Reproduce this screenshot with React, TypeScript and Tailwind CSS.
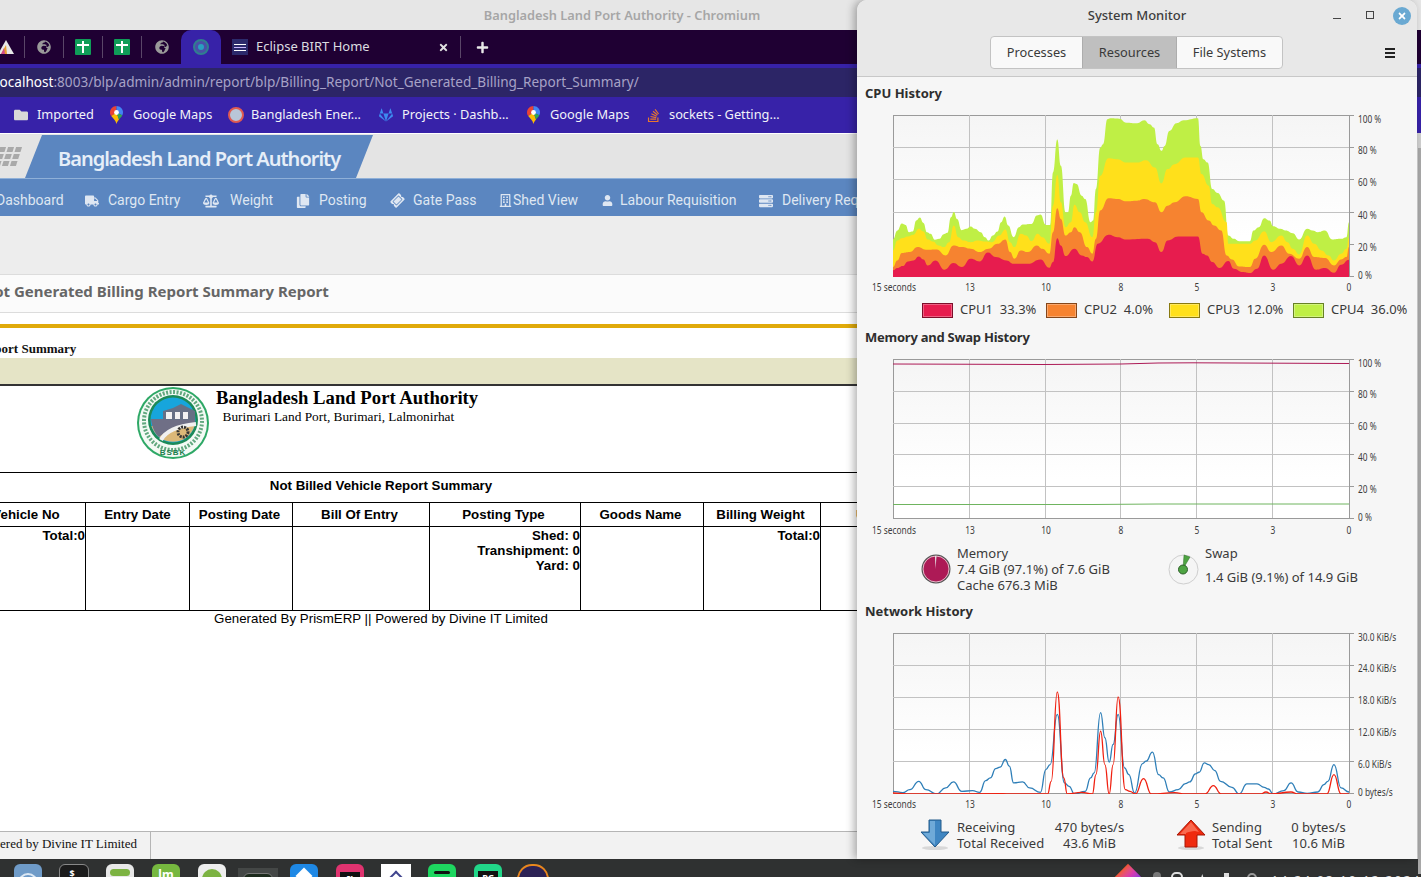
import { FaBalanceScale, FaCopy, FaFolder, FaGitlab, FaGlobeAfrica, FaPlus, FaRegBuilding, FaServer, FaStackOverflow, FaTicketAlt, FaTimes, FaTruck, FaUser } from 'react-icons/fa';

type Pt = [number, number];

const cpu4: Pt[] = [[93,402],[105,375],[118,354],[128,358],[138,380],[148,378],[158,345],[168,336],[178,352],[188,380],[198,385],[210,403],[222,400],[235,386],[245,382],[255,335],[263,319],[272,340],[285,374],[298,370],[310,363],[322,370],[338,380],[350,395],[360,405],[372,390],[385,378],[395,350],[405,333],[415,360],[430,395],[445,365],[455,357],[480,355],[495,330],[505,327],[520,358],[532,358],[540,200],[552,101],[562,180],[575,320],[582,320],[590,270],[598,232],[606,235],[620,270],[630,280],[645,350],[652,345],[660,250],[672,125],[680,115],[692,40],[700,37],[725,38],[745,50],[775,52],[795,43],[810,55],[822,65],[832,115],[843,135],[852,120],[865,75],[885,52],[905,43],[945,37],[952,120],[960,160],[972,170],[985,250],[1000,262],[1018,285],[1030,390],[1045,400],[1060,407],[1090,407],[1100,375],[1115,365],[1130,338],[1145,345],[1155,362],[1175,370],[1190,375],[1210,383],[1228,402],[1250,370],[1265,375],[1280,380],[1300,375],[1320,402],[1345,400],[1360,395],[1367,350]];
const cpu3: Pt[] = [[93,435],[105,405],[118,398],[135,393],[150,388],[165,370],[178,378],[190,402],[205,408],[220,420],[235,425],[250,410],[263,360],[275,395],[290,405],[310,410],[330,405],[350,408],[370,410],[390,390],[407,372],[420,410],[432,425],[450,385],[465,390],[480,407],[497,385],[510,395],[530,415],[540,300],[552,208],[562,290],[575,365],[590,350],[600,297],[615,320],[630,350],[650,395],[660,320],[672,210],[695,157],[720,160],[745,170],[775,170],[800,163],[825,185],[843,233],[860,190],[880,175],[910,155],[945,155],[955,205],[975,240],[985,295],[1000,305],[1025,350],[1030,415],[1090,415],[1105,405],[1130,377],[1150,410],[1178,390],[1195,410],[1210,430],[1228,447],[1250,390],[1270,415],[1290,435],[1310,450],[1325,465],[1345,445],[1360,430],[1367,395]];
const cpu2: Pt[] = [[93,485],[105,465],[118,443],[140,440],[162,425],[185,433],[215,432],[240,450],[262,420],[285,425],[310,430],[335,440],[360,430],[385,415],[407,402],[420,440],[432,460],[450,435],[470,440],[495,420],[510,430],[530,445],[540,380],[552,308],[562,340],[575,390],[590,380],[600,365],[615,380],[635,425],[650,445],[660,400],[672,315],[695,278],[720,280],[745,287],[775,285],[795,280],[825,290],[843,320],[860,300],[880,290],[910,272],[945,280],[955,320],[975,345],[990,360],[1010,375],[1025,450],[1040,462],[1060,483],[1090,485],[1105,460],[1130,418],[1150,440],[1178,420],[1200,445],[1228,460],[1250,425],[1270,455],[1300,458],[1325,480],[1345,462],[1360,455],[1367,425]];
const cpu1: Pt[] = [[93,495],[105,488],[120,482],[135,468],[150,465],[165,453],[178,462],[190,480],[212,465],[237,493],[262,473],[285,485],[310,460],[335,468],[358,441],[380,455],[410,465],[430,475],[470,475],[505,462],[530,487],[540,470],[552,398],[562,420],[575,452],[600,430],[620,450],[635,455],[650,468],[665,415],[695,388],[720,395],[745,402],[805,400],[825,410],[843,440],[860,405],[890,393],[945,393],[958,445],[970,450],[985,470],[1005,488],[1030,467],[1045,490],[1070,500],[1090,503],[1110,490],[1130,450],[1155,493],[1178,475],[1205,452],[1228,480],[1250,450],[1275,493],[1300,488],[1325,502],[1345,478],[1367,463]];
const netIn: Pt[] = [[93,480],[120,484],[140,475],[165,450],[185,475],[215,488],[240,470],[262,452],[285,480],[315,478],[335,483],[352,448],[365,440],[380,412],[392,408],[407,385],[418,405],[430,455],[455,452],[475,470],[505,483],[520,415],[532,400],[552,250],[572,455],[585,465],[600,488],[630,480],[645,440],[655,425],[673,245],[685,320],[697,393],[708,340],[722,250],[740,410],[752,430],[768,485],[790,397],[800,390],[818,363],[835,430],[848,440],[865,482],[890,475],[910,457],[922,452],[938,428],[948,423],[963,395],[975,400],[992,418],[1008,450],[1040,468],[1060,488],[1082,458],[1110,458],[1130,468],[1142,473],[1155,488],[1185,478],[1205,455],[1225,482],[1250,486],[1280,482],[1297,460],[1308,450],[1325,400],[1345,470],[1367,482]];
const netOut: Pt[] = [[93,485],[130,488],[400,487],[420,488],[525,488],[535,450],[552,183],[570,440],[580,488],[620,483],[650,488],[660,430],[673,300],[685,400],[697,488],[708,400],[722,198],[742,475],[755,480],[770,488],[793,442],[815,488],[880,484],[910,488],[965,488],[988,463],[1010,488],[1120,488],[1135,482],[1150,488],[1205,482],[1225,488],[1305,488],[1325,430],[1345,488],[1367,488]];

const smooth = (pts: Pt[]) => {
  let d = `M${pts[0][0]} ${pts[0][1]}`;
  for (let i = 1; i < pts.length; i++) {
    const [x0, y0] = pts[i - 1];
    const [x1, y1] = pts[i];
    const mx = (x0 + x1) / 2;
    d += `C${mx} ${y0} ${mx} ${y1} ${x1} ${y1}`;
  }
  return d;
};

const ticks = [
  { label: '13', x: 105 },
  { label: '10', x: 181 },
  { label: '8', x: 256 },
  { label: '5', x: 332 },
  { label: '3', x: 408 },
];

const labelShift = [8, 7, 7, 7, 7, 3];
const cond = 'fill-[#3c3c3c] text-[10px] font-["Noto_Sans"]';

const Chart = ({ id, h, yLabels, xDy = 15, children }: { id: string; h: number; yLabels: string[]; xDy?: number; children: React.ReactNode }) => {
  const top = 14;
  const bottom = top + h;
  const rows = yLabels.map((_, i) => Math.round(top + (h * i) / (yLabels.length - 1)));
  return (
    <svg width="552" height="192" className="block">
      <defs>
        <linearGradient id={id} x1="0" y1="0" x2="0" y2="1">
          <stop offset="0" stopColor="#f5f5f5" />
          <stop offset="0.75" stopColor="#ffffff" />
        </linearGradient>
      </defs>
      <rect x="28.5" y={top + 0.5} width="456" height={h} fill={`url(#${id})`} stroke="#9a9a9a" />
      {rows.slice(1, -1).map((y) => (
        <line key={y} x1="28" x2="484" y1={y + 0.5} y2={y + 0.5} stroke="#c2c2c2" />
      ))}
      {ticks.map((t) => (
        <line key={t.x} x1={t.x - 0.5} x2={t.x - 0.5} y1={top} y2={bottom} stroke="#c2c2c2" />
      ))}
      {children}
      {rows.map((y, i) => (
        <g key={y}>
          <line x1="484" x2="489" y1={y + 0.5} y2={y + 0.5} stroke="#9a9a9a" />
          <text transform={`translate(493 ${y + labelShift[i]}) scale(0.83 1)`} className={cond}>
            {yLabels[i]}
          </text>
        </g>
      ))}
      <text transform={`translate(7 ${bottom + xDy}) scale(0.84 1)`} className={cond}>15 seconds</text>
      {ticks.map((t) => (
        <text key={t.label} transform={`translate(${t.x} ${bottom + xDy}) scale(0.84 1)`} textAnchor="middle" className={cond}>
          {t.label}
        </text>
      ))}
      <text transform={`translate(484 ${bottom + xDy}) scale(0.84 1)`} textAnchor="middle" className={cond}>0</text>
    </svg>
  );
};

const pct = ['100 %', '80 %', '60 %', '40 %', '20 %', '0 %'];
const net = ['30.0 KiB/s', '24.0 KiB/s', '18.0 KiB/s', '12.0 KiB/s', '6.0 KiB/s', '0 bytes/s'];

const legend = [
  { name: 'CPU1', val: '33.3%', cls: 'bg-[#e71c4e] border-[#7d0e2a]', w: 'w-[124px]' },
  { name: 'CPU2', val: '4.0%', cls: 'bg-[#f68330] border-[#84461a]', w: 'w-[123px]' },
  { name: 'CPU3', val: '12.0%', cls: 'bg-[#ffe01b] border-[#89790f]', w: 'w-[124px]' },
  { name: 'CPU4', val: '36.0%', cls: 'bg-[#bfef45] border-[#678125]', w: 'w-[124px]' },
];

const MapPin = () => (
  <svg width="13" height="18" viewBox="0 0 13 18">
    <path d="M6.5 0C2.9 0 0 2.9 0 6.4c0 1.400.5 2.600 1.200 3.600L6.500 6.500z" fill="#ea4335" />
    <path d="M6.500 0c3.600 0 6.500 2.900 6.500 6.400 0 1-.3 2-.7 2.800L6.500 6.500z" fill="#4285f4" />
    <path d="M1.200 10c1.500 2.200 4.300 4 5.300 8 .5-2 1.500-3.300 2.500-4.500L6.500 6.500z" fill="#fbbc04" />
    <path d="M12.300 9.200C11.500 11 10 12 9 13.500L6.500 6.500z" fill="#34a853" />
    <circle cx="6.500" cy="6.500" r="2.400" fill="#fff" />
  </svg>
);

const TabCell = ({ children }: { children: React.ReactNode }) => (
  <div className="flex h-[34px] w-[39px] items-center justify-center">
    <div className="flex h-[22px] w-full items-center justify-center border-r border-[#5a4668]">{children}</div>
  </div>
);

const SheetIcon = () => (
  <div className="relative h-4 w-4 rounded-[1px] bg-[#0f9d58]">
    <div className="absolute left-[2px] right-[2px] top-[5px] h-[2px] bg-white" />
    <div className="absolute bottom-[2px] left-[7px] top-[2px] w-[2px] bg-white" />
  </div>
);

const bookmarks = [
  { icon: <FaFolder className="text-[14px] text-[#d8d8d8]" />, text: 'Imported', w: 'w-[96px]', ml: 'ml-[14px]' },
  { icon: <MapPin />, text: 'Google Maps', w: 'w-[118px]', ml: 'ml-0' },
  { icon: <div className="h-4 w-4 rounded-full border-2 border-[#e05a50] bg-[#b9c6d8]" />, text: 'Bangladesh Ener…', w: 'w-[151px]', ml: 'ml-0' },
  { icon: <FaGitlab className="text-[14px] text-[#3d8bf0]" />, text: 'Projects · Dashb…', w: 'w-[148px]', ml: 'ml-0' },
  { icon: <MapPin />, text: 'Google Maps', w: 'w-[119px]', ml: 'ml-0' },
  { icon: <FaStackOverflow className="text-[15px] text-[#e8772e]" />, text: 'sockets - Getting…', w: 'w-[150px]', ml: 'ml-0' },
];

const navItems = [
  { icon: <FaTruck className="text-[14px]" />, text: 'Cargo Entry', w: 'w-[118px]' },
  { icon: <FaBalanceScale className="text-[16px]" />, text: 'Weight', w: 'w-[93px]', gap: 'gap-[11px]' },
  { icon: <FaCopy className="text-[14px]" />, text: 'Posting', w: 'w-[94px]' },
  { icon: <FaTicketAlt className="-rotate-45 text-[13px]" />, text: 'Gate Pass', w: 'w-[108px]' },
  { icon: <FaRegBuilding className="text-[13px]" />, text: 'Shed View', w: 'w-[102px]', gap: 'gap-[1px]' },
  { icon: <FaUser className="text-[11px]" />, text: 'Labour Requisition', w: 'w-[159px]', gap: 'gap-[6px]' },
  { icon: <FaServer className="text-[14px]" />, text: 'Delivery Requisition', w: 'w-[160px]' },
];

const Logo = () => (
  <svg width="78" height="72" viewBox="0 0 78 72" className="block">
    <circle cx="38" cy="36" r="36" fill="#2ea866" />
    <circle cx="38" cy="36" r="34" fill="#f4faf5" />
    <circle cx="38" cy="34" r="29" fill="none" stroke="#62a87f" strokeWidth="4" strokeDasharray="2 1.500" />
    <circle cx="38" cy="33" r="25" fill="#1c8a58" />
    <circle cx="38" cy="33" r="22.500" fill="#17a5dc" />
    <path d="M16.500 39a22.500 22.500 0 0 0 43 0z" fill="#dcb878" />
    <path d="M16 32h44v6C52 38 36 40 24 50c-4-3-7-10-8-18z" fill="#6f6f86" />
    <path d="M28 24l10-3 8-4 14 7v9H28z" fill="#667085" />
    <path d="M31 25h6v7h-6zM40 25h5v7h-5zM48 25h5v7h-5z" fill="#f2f2f2" />
    <path d="M26 53c4-8 16-14 35-16" fill="none" stroke="#f0f0f0" strokeWidth="4" />
    <circle cx="48" cy="45" r="5" fill="none" stroke="#333" strokeWidth="3" strokeDasharray="2 1" />
    <text x="38" y="68" textAnchor="middle" className="fill-[#1c7f4f] text-[8px] font-bold tracking-[1px] font-['Liberation_Sans']">BSBK</text>
  </svg>
);

const headers = ['Vehicle No', 'Entry Date', 'Posting Date', 'Bill Of Entry', 'Posting Type', 'Goods Name', 'Billing Weight'];

const Dock = ({ cls, children }: { cls: string; children?: React.ReactNode }) => (
  <div className={`flex h-[30px] w-[28px] shrink-0 items-start justify-center overflow-hidden rounded-[6px] pt-[2px] ${cls}`}>{children}</div>
);

const App = () => {
  return (
    <div className="relative flex h-[877px] w-[1421px] flex-col overflow-hidden bg-white font-['Noto_Sans',sans-serif]">
      {/* browser chrome */}
      <div className="flex h-[30px] shrink-0 items-center justify-center bg-[#e6e6e6] pr-[177px] pt-px text-[12.800px] font-semibold text-[#a6a6a6]">
        Bangladesh Land Port Authority - Chromium
      </div>
      <div className="flex h-[34px] shrink-0 items-center bg-[#1f0033]">
        <div className="flex h-[34px] w-[24px] items-center justify-end overflow-hidden pr-[10px]">
          <div className="flex h-[22px] items-center">
            <svg width="16" height="16" viewBox="0 0 16 16" className="shrink-0">
              <path d="M8 1l8 14H0z" fill="#e8e8e8" />
              <path d="M8 6l-5 9h6z" fill="#e8a030" />
              <path d="M6 9l-3 6h4z" fill="#d04a8a" />
            </svg>
          </div>
        </div>
        <div className="h-[22px] w-px bg-[#5a4668]" />
        <div className="flex">
          <TabCell><FaGlobeAfrica className="text-[14px] text-[#9a9a9a]" /></TabCell>
          <TabCell><SheetIcon /></TabCell>
          <TabCell><SheetIcon /></TabCell>
          <div className="flex h-[34px] w-[39px] items-center justify-center">
            <FaGlobeAfrica className="text-[14px] text-[#9a9a9a]" />
          </div>
        </div>
        <div className="flex h-[34px] w-[40px] items-center justify-center rounded-t-[10px] bg-[#3722a8]">
          <div className="flex h-4 w-4 items-center justify-center rounded-full border-2 border-[#2f7f8f] bg-[#4a4fa8]">
            <div className="h-[6px] w-[6px] rounded-full bg-[#2a9fc0]" />
          </div>
        </div>
        <div className="flex h-[34px] w-[239px] items-center pl-[11px] text-[13px] text-[#dcdce0]">
          <div className="flex h-4 w-4 flex-col justify-center gap-[2px] bg-[#2c2a6c] px-[2px]">
            <div className="h-px bg-white" />
            <div className="h-px bg-[#c9b6ff]" />
            <div className="h-px bg-white" />
          </div>
          <span className="ml-[8px] flex-1">Eclipse BIRT Home</span>
          <FaTimes className="mr-[11px] text-[11px] text-[#e0e0e0]" />
        </div>
        <div className="h-[22px] w-px bg-[#5a4668]" />
        <FaPlus className="ml-[15px] text-[13px] text-[#e8e8e8]" />
      </div>
      <div className="h-[4px] shrink-0 bg-[#3722a8]" />
      <div className="flex h-[29px] shrink-0 items-center overflow-hidden whitespace-nowrap bg-[#2c2566] text-[13.600px] text-[#a7a2c6]">
        <span className="-ml-[4px] text-white">localhost</span>
        <span>:8003/blp/admin/admin/report/blp/Billing_Report/Not_Generated_Billing_Report_Summary/</span>
      </div>
      <div className="flex h-[36px] shrink-0 items-center whitespace-nowrap bg-[#3722a8] text-[12.800px] text-[#f2f2f8]">
        {bookmarks.map((b, i) => (
          <div key={i} className={`flex shrink-0 items-center ${b.w} ${b.ml}`}>
            <span className="flex w-[23px] shrink-0 justify-start">{b.icon}</span>
            <span>{b.text}</span>
          </div>
        ))}
      </div>
      <div className="h-px shrink-0 bg-white" />

      {/* page */}
      <div className="flex h-[44px] shrink-0 items-end bg-[#e4e4e4]">
        <div className="flex h-[44px] w-[25px] items-center">
          <div className="-ml-[3px] grid -skew-x-[18deg] grid-cols-3 gap-[2px]">
            {Array.from({ length: 9 }).map((_, i) => (
              <div key={i} className="h-[5px] w-[6px] bg-[#a9a9a9]" />
            ))}
          </div>
        </div>
        <div className="flex h-[43px] w-[348px] items-center whitespace-nowrap bg-[#5b86c0] pl-[33px] pt-[5px] text-[20px] font-semibold tracking-[-1px] text-[#e6eef8] [clip-path:polygon(17px_0,100%_0,331px_100%,0_100%)]">
          Bangladesh Land Port Authority
        </div>
      </div>
      <div className="flex h-[38px] shrink-0 items-center overflow-hidden whitespace-nowrap border-t border-[#8fb0d8] bg-[#5b86c0] pt-[6px] font-['Roboto'] text-[14px] text-[#dfe7f2]">
        <span className="-ml-[4px] w-[89px] shrink-0">Dashboard</span>
        {navItems.map((n) => (
          <div key={n.text} className={`flex shrink-0 items-center ${n.w} ${n.gap ?? 'gap-[9px]'}`}>
            <span className="flex min-w-[14px] justify-center">{n.icon}</span>
            <span>{n.text}</span>
          </div>
        ))}
      </div>
      <div className="h-[58px] shrink-0 bg-[#ededed]" />
      <div className="flex h-[39px] shrink-0 items-center overflow-hidden whitespace-nowrap border-y border-[#dcdcdc] bg-[#fbfbfb] pb-[4px] text-[15px] font-bold text-[#666666]">
        <span className="-ml-[18px] shrink-0">Not Generated Billing Report Summary Report</span>
      </div>
      <div className="mt-[11px] h-[4px] shrink-0 bg-[#e0aa0a]" />
      <div className="flex h-[30px] shrink-0 items-end overflow-hidden whitespace-nowrap font-['Liberation_Serif',serif] text-[13px] font-bold text-[#111]">
        <span className="-ml-[106px] shrink-0">Not Generated Report Summary</span>
      </div>
      <div className="h-[26px] shrink-0 bg-[#e5e4c6]" />
      <div className="h-[2px] shrink-0 bg-[#333]" />
      <div className="flex h-[87px] shrink-0 border-b border-black font-['Liberation_Serif',serif] text-black">
        <div className="ml-[135px] mt-px">
          <Logo />
        </div>
        <div className="ml-[3px]">
          <div className="text-[18.700px] font-bold leading-[24px]">Bangladesh Land Port Authority</div>
          <div className="ml-[6.500px] text-[13.330px] leading-[14px]">Burimari Land Port, Burimari, Lalmonirhat</div>
        </div>
      </div>
      <div className="-ml-[34px] flex h-[29px] w-[830px] shrink-0 items-center justify-center pb-[3px] font-['Liberation_Sans',sans-serif] text-[13.300px] font-bold text-black">
        Not Billed Vehicle Report Summary
      </div>
      <table className="-ml-[34px] w-[1000px] shrink-0 table-fixed border-collapse font-['Liberation_Sans',sans-serif] text-[13.300px] text-black">
        <colgroup>
          <col className="w-[119px]" />
          <col className="w-[104px]" />
          <col className="w-[103px]" />
          <col className="w-[137px]" />
          <col className="w-[151px]" />
          <col className="w-[123px]" />
          <col className="w-[117px]" />
          <col />
        </colgroup>
        <thead>
          <tr className="h-[24px]">
            {headers.map((h, i) => (
              <th key={h} className={`border border-black p-0 text-center font-bold ${i > 1 ? 'pr-[3px]' : ''}`}>{h}</th>
            ))}
            <th className="border-y border-black p-0 pl-[35px] text-left font-bold">Unit</th>
          </tr>
        </thead>
        <tbody className="font-bold">
          <tr className="h-[84px] align-top leading-[15px]">
            <td className="border border-black p-0 pt-px text-right">Total:0</td>
            <td className="border border-black" />
            <td className="border border-black" />
            <td className="border border-black" />
            <td className="border border-black p-0 pt-px text-right">
              Shed: 0<br />Transhipment: 0<br />Yard: 0
            </td>
            <td className="border border-black" />
            <td className="border border-black p-0 pt-px text-right">Total:0</td>
            <td className="border-y border-black" />
          </tr>
        </tbody>
      </table>
      <div className="-ml-[34px] w-[830px] shrink-0 text-center font-['Liberation_Sans',sans-serif] text-[13.300px] leading-[15px] text-black">
        Generated By PrismERP || Powered by Divine IT Limited
      </div>
      <div className="flex-1" />
      <div className="flex h-[28px] shrink-0 overflow-hidden whitespace-nowrap border-t border-[#b5b5b5] bg-[#f2f2f2] pb-[3px] font-['Liberation_Serif',serif] text-[13px] text-[#111]">
        <div className="-mb-[3px] flex w-[151px] items-center justify-end border-r border-[#b5b5b5] pb-[3px] pr-[13px]">Powered by Divine IT Limited</div>
      </div>

      {/* taskbar */}
      <div className="flex h-[18px] shrink-0 items-start overflow-hidden bg-[#2f3131]">
        <div className="ml-[14px] mt-[5px] flex w-[536px] items-center">
          <Dock cls="bg-[#6f9bc8]"><div className="mt-[7px] h-5 w-5 rounded-full border-2 border-[#dce8f4]" /></Dock>
          <Dock cls="ml-[17px] w-[30px] border border-[#888] bg-[#1b1b1b] text-[9px] font-bold text-white">$_</Dock>
          <Dock cls="ml-[17px] bg-[#e8e8e8]"><div className="mt-[3px] h-[7px] w-5 rounded-full bg-[#7cb342]" /></Dock>
          <Dock cls="ml-[18px] bg-[#76b83f] text-[12px] font-bold text-white">lm</Dock>
          <Dock cls="ml-[18px] bg-[#eeeeee]"><div className="mt-[3px] h-5 w-5 rounded-full bg-[#7cb342]" /></Dock>
          <div className="relative ml-[12px] -mt-[5px] flex h-[18px] w-[40px] shrink-0 justify-center bg-[#444746] pt-[5px]">
            <Dock cls="w-[30px] border border-[#777] bg-[#1c2a1c]" />
          </div>
          <Dock cls="ml-[12px] bg-[#1e88e5]"><div className="mt-[4px] h-3 w-3 rotate-45 bg-white" /></Dock>
          <Dock cls="ml-[18px] bg-[#e0336f]"><div className="mt-[6px] h-5 w-5 bg-[#111] text-center text-[9px] font-bold text-white">IJ</div></Dock>
          <Dock cls="ml-[17px] w-[30px] rounded-none bg-white"><div className="mt-[7px] h-3 w-3 rotate-45 border-l-2 border-t-2 border-[#40458e]" /></Dock>
          <Dock cls="ml-[17px] bg-[#1ed760]"><div className="mt-[5px] h-[3px] w-4 rounded-full bg-[#111]" /></Dock>
          <Dock cls="ml-[18px] bg-[#21d789]"><div className="mt-[5px] h-5 w-5 bg-[#111] text-center text-[9px] font-bold text-white">PC</div></Dock>
          <Dock cls="ml-[15px] w-[32px] rounded-full border-2 border-[#e8871e] bg-[#2c2255]" />
        </div>
        <div className="ml-[569px] mt-[9px] flex items-start">
          <div className="h-[20px] w-[20px] rotate-45 bg-gradient-to-r from-[#f2572d] via-[#d838b0] to-[#7a2fe0]" />
        </div>
        <div className="ml-[15px] mt-[13px] h-4 w-[10px] rounded-full bg-[#777]" />
        <div className="ml-[10px] mt-[13px] h-4 w-[15px] rounded-t-[5px] border-2 border-[#ddd]" />
        <div className="ml-[15px] mt-[15px] h-3 w-[10px] bg-[#ddd] [clip-path:polygon(50%_0,100%_100%,0_100%)]" />
        <div className="ml-[18px] mt-[14px] h-4 w-[6px] bg-[#ddd]" />
        <div className="ml-[18px] mt-[14px] h-4 w-[12px] rounded-full border-2 border-[#999]" />
        <div className="ml-[14px] mt-[13px] whitespace-nowrap text-[13px] leading-[16px] tracking-[1.500px] text-[#ddd]">14:24:03 10:12:2024</div>
      </div>

      {/* right edge of the browser behind the monitor */}
      <div className="absolute right-0 top-[133px] h-[726px] w-[4px] bg-[#cfcfcf]">
        <div className="absolute right-0 top-[15px] h-full w-[3px] bg-[#a8a8a8]" />
      </div>

      {/* system monitor window */}
      <div className="absolute left-[857px] top-0 flex h-[859px] w-[560px] flex-col overflow-hidden rounded-t-[10px] bg-[#f6f6f6] text-[13px] text-[#3a3a3a] shadow-[-3px_0_8px_rgba(0,0,0,0.3)]">
        <div className="relative h-[77px] shrink-0 border-b border-[#c8c8c8] bg-[#e8e8e8]">
          <div className="pt-[7px] text-center text-[13px] font-medium leading-[17px] text-[#3d3d3d]">System Monitor</div>
          <div className="absolute bottom-[7px] left-[133px] flex h-[33px] w-[293px] overflow-hidden rounded-[4px] border border-[#c3c3c3] bg-[#f9f9f9] text-[12.800px]">
            <div className="flex w-[91px] items-center justify-center">Processes</div>
            <div className="flex w-[95px] items-center justify-center border-x border-[#adadad] bg-[#bfbfbf]">Resources</div>
            <div className="flex flex-1 items-center justify-center">File Systems</div>
          </div>
          <div className="absolute left-[528px] top-[48px] flex w-[10px] flex-col gap-[2px]">
            <div className="h-[2px] bg-[#222]" />
            <div className="h-[2px] bg-[#222]" />
            <div className="h-[2px] bg-[#222]" />
          </div>
          <div className="absolute left-[476px] top-[18px] h-px w-[8px] bg-[#444]" />
          <div className="absolute left-[509px] top-[11px] h-[8px] w-[8px] border border-[#444]" />
          <div className="absolute left-[536px] top-[7px] flex h-[18px] w-[18px] items-center justify-center rounded-full bg-[#6aa9d2]">
            <FaTimes className="text-[10px] text-white" />
          </div>
        </div>
        <div className="flex-1 px-2">
          <h2 className="mt-2 h-4 text-[13px] font-bold leading-4 text-[#2e2e2e]">CPU History</h2>
          <Chart id="cpu-bg" h={161} yLabels={pct}>
            <svg x="28" y="15" width="456" height="161" viewBox="93 30 1274 485" preserveAspectRatio="none">
              {[
                { pts: cpu4, c: '#bfef45' },
                { pts: cpu3, c: '#ffe01b' },
                { pts: cpu2, c: '#f68330' },
                { pts: cpu1, c: '#e71c4e' },
              ].map((s) => (
                <path key={s.c} d={`${smooth(s.pts)}L1367 515L93 515Z`} fill={s.c} />
              ))}
            </svg>
          </Chart>
          <div className="ml-[57px] mt-[9px] flex h-4 items-center whitespace-nowrap">
            {legend.map((l) => (
              <div key={l.name} className={`flex shrink-0 items-center gap-[7px] ${l.w}`}>
                <div className={`h-[15px] w-[31px] shrink-0 border ${l.cls} shadow-[inset_0_0_0_1px_rgba(255,255,255,0.3)]`} />
                <span>{l.name}&nbsp; {l.val}</span>
              </div>
            ))}
          </div>
          <h2 className="mt-[11px] h-4 text-[13px] font-bold leading-4 tracking-[-0.25px] text-[#2e2e2e]">Memory and Swap History</h2>
          <Chart id="mem-bg" h={159} yLabels={pct} xDy={16}>
            <svg x="28" y="15" width="456" height="159" viewBox="0 0 456 159" preserveAspectRatio="none">
              <path d="M0 4L150 4.500L228 4L265 3L300 2.800L456 3.500" fill="none" stroke="#ad1a56" strokeWidth="1" />
              <path d="M0 144.500L200 144.500L265 144L456 144" fill="none" stroke="#6fb45f" strokeWidth="1" />
            </svg>
          </Chart>
          <div className="ml-[56px] mt-2 flex h-12 leading-4">
            <div className="flex w-[247px]">
              <svg width="30" height="30" viewBox="0 0 30 30" className="mt-[9px]">
                <circle cx="15" cy="15" r="14.500" fill="#555" />
                <circle cx="15" cy="15" r="13" fill="#ad1a56" stroke="#e9b6c8" strokeWidth="1" />
                <path d="M14.500 15L14 2h1.500z" fill="#e8e8e8" />
              </svg>
              <div className="ml-[6px]">
                <div>Memory</div>
                <div>7.4 GiB (97.1%) of 7.6 GiB</div>
                <div>Cache 676.3 MiB</div>
              </div>
            </div>
            <div className="flex">
              <svg width="31" height="31" viewBox="0 0 31 31" className="mt-[9px]">
                <circle cx="15.500" cy="15.500" r="14.500" fill="#f5f5f5" stroke="#cfcfcf" />
                <path d="M15 15L16 1l6 2z" fill="#4ea442" stroke="#2e6f28" strokeWidth="0.5" />
                <circle cx="15" cy="15.500" r="4.500" fill="#4ea442" stroke="#2e5f2a" />
              </svg>
              <div className="ml-[6px]">
                <div>Swap</div>
                <div className="mt-2">1.4 GiB (9.1%) of 14.9 GiB</div>
              </div>
            </div>
          </div>
          <h2 className="mt-[10px] h-4 text-[13px] font-bold leading-4 text-[#2e2e2e]">Network History</h2>
          <Chart id="net-bg" h={160} yLabels={net}>
            <svg x="28" y="15" width="456" height="160" viewBox="93 10 1274 478" preserveAspectRatio="none">
              <path d={smooth(netIn)} fill="none" stroke="#2f7fb8" strokeWidth="1.300" vectorEffect="non-scaling-stroke" />
              <path d={smooth(netOut)} fill="none" stroke="#f02010" strokeWidth="1.300" vectorEffect="non-scaling-stroke" />
            </svg>
          </Chart>
          <div className="ml-[55px] mt-[8px] flex h-8 leading-4">
            <div className="flex w-[256px]">
              <svg width="30" height="32" viewBox="0 0 30 32">
                <ellipse cx="15" cy="29" rx="13" ry="2" fill="#d8d8d8" />
                <path d="M9 1h12v12h8L15 28 1 13h8z" fill="#3f86c2" stroke="#235a8a" />
                <path d="M10 2h5v24L3 14h7z" fill="#6faad8" />
              </svg>
              <div className="ml-[7px] w-[97px]">
                <div>Receiving</div>
                <div>Total Received</div>
              </div>
              <div className="w-[71px] whitespace-nowrap text-center">
                <div>470 bytes/s</div>
                <div>43.6 MiB</div>
              </div>
            </div>
            <div className="flex">
              <svg width="30" height="32" viewBox="0 0 30 32">
                <ellipse cx="15" cy="29" rx="13" ry="2" fill="#d8d8d8" />
                <path d="M15 1l14 15h-8v12H9V16H1z" fill="#ef2a0e" stroke="#a51606" />
                <path d="M15 3L4 15h6v-1c2-1 6-2 9-2l4 1z" fill="#f9694f" />
              </svg>
              <div className="ml-[6px] w-[79px]">
                <div>Sending</div>
                <div>Total Sent</div>
              </div>
              <div className="w-[55px] whitespace-nowrap text-center">
                <div>0 bytes/s</div>
                <div>10.6 MiB</div>
              </div>
            </div>
          </div>
        </div>
      </div>
    </div>
  );
};

export default App;
